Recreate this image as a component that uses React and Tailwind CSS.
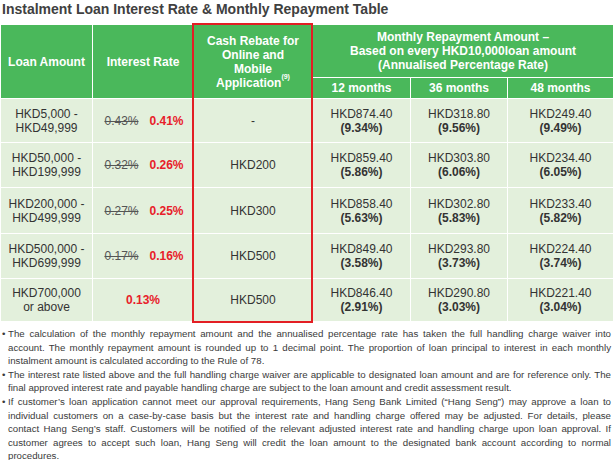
const rows = [
  { amount: ['HKD5,000 -', 'HKD49,999'], old: '0.43%', rate: '0.41%', rebate: '-', m: [['HKD874.40', '(9.34%)'], ['HKD318.80', '(9.56%)'], ['HKD249.40', '(9.49%)']], h: 'h-[44px]' },
  { amount: ['HKD50,000 -', 'HKD199,999'], old: '0.32%', rate: '0.26%', rebate: 'HKD200', m: [['HKD859.40', '(5.86%)'], ['HKD303.80', '(6.06%)'], ['HKD234.40', '(6.05%)']], h: 'h-[45px]' },
  { amount: ['HKD200,000 -', 'HKD499,999'], old: '0.27%', rate: '0.25%', rebate: 'HKD300', m: [['HKD858.40', '(5.63%)'], ['HKD302.80', '(5.83%)'], ['HKD233.40', '(5.82%)']], h: 'h-[46px]' },
  { amount: ['HKD500,000 -', 'HKD699,999'], old: '0.17%', rate: '0.16%', rebate: 'HKD500', m: [['HKD849.40', '(3.58%)'], ['HKD293.80', '(3.73%)'], ['HKD224.40', '(3.74%)']], h: 'h-[45px]' },
  { amount: ['HKD700,000', 'or above'], old: null, rate: '0.13%', rebate: 'HKD500', m: [['HKD846.40', '(2.91%)'], ['HKD290.80', '(3.03%)'], ['HKD221.40', '(3.04%)']], h: 'h-[43px]' },
];

const notes = [
  [
    'The calculation of the monthly repayment amount and the annualised percentage rate has taken the full handling charge waiver into',
    'account. The monthly repayment amount is rounded up to 1 decimal point. The proportion of loan principal to interest in each monthly',
    'instalment amount is calculated according to the Rule of 78.',
  ],
  [
    'The interest rate listed above and the full handling charge waiver are applicable to designated loan amount and are for reference only. The',
    'final approved interest rate and payable handling charge are subject to the loan amount and credit assessment result.',
  ],
  [
    'If customer\u2019s loan application cannot meet our approval requirements, Hang Seng Bank Limited (\u201cHang Seng\u201d) may approve a loan to',
    'individual customers on a case-by-case basis but the interest rate and handling charge offered may be adjusted. For details, please',
    'contact Hang Seng\u2019s staff. Customers will be notified of the relevant adjusted interest rate and handling charge upon loan approval. If',
    'customer agrees to accept such loan, Hang Seng will credit the loan amount to the designated bank account according to normal',
    'procedures.',
  ],
];

const th = 'border border-white bg-[#4ab85b] text-white font-bold text-[12px] leading-[14px] text-center align-middle p-0';
const td = 'border border-white bg-[#e3f0dc] text-[#333] text-[12px] leading-[14px] text-center align-middle p-0';

export default function App() {
  return (
    <div className="w-[613px] h-[460px] bg-white overflow-hidden font-['Liberation_Sans',Arial,sans-serif]">
      <div className="h-[24px] pl-[2px] pt-[1px] text-[14px] leading-[17px] font-bold text-[#404040]">
        Instalment Loan Interest Rate &amp; Monthly Repayment Table
      </div>

      <div className="relative">
        <table className="w-[613px] table-fixed border-collapse">
          <colgroup>
            <col className="w-[92px]" />
            <col className="w-[101px]" />
            <col className="w-[119px]" />
            <col className="w-[98px]" />
            <col className="w-[97px]" />
            <col className="w-[106px]" />
          </colgroup>
          <thead>
            <tr className="h-[53px]">
              <th rowSpan={2} className={th}>Loan Amount</th>
              <th rowSpan={2} className={th}>Interest Rate</th>
              <th rowSpan={2} className={th}>
                <div className="pt-[1px]">
                  Cash Rebate for<br />Online and<br />Mobile<br />
                  Application<sup className="text-[7px] align-top relative top-[1px]">(9)</sup>
                </div>
              </th>
              <th colSpan={3} className={th}>
                Monthly Repayment Amount –<br />
                Based on every HKD10,000loan amount<br />
                (Annualised Percentage Rate)
              </th>
            </tr>
            <tr className="h-[21px]">
              <th className={th}>12 months</th>
              <th className={th}>36 months</th>
              <th className={th}>48 months</th>
            </tr>
          </thead>
          <tbody>
            {rows.map((r, i) => (
              <tr key={i} className={r.h}>
                <td className={td}>
                  {r.amount[0]}<br />{r.amount[1]}
                </td>
                <td className={td}>
                  {r.old ? (
                    <div className="flex items-center justify-center gap-[11px] pl-[2px]">
                      <span className="text-[#555] line-through decoration-[#555]">{r.old}</span>
                      <span className="text-[#e8202a] font-bold">{r.rate}</span>
                    </div>
                  ) : (
                    <span className="text-[#e8202a] font-bold">{r.rate}</span>
                  )}
                </td>
                <td className={td}>{r.rebate}</td>
                {r.m.map((c, j) => (
                  <td key={j} className={td}>
                    <div>{c[0]}</div>
                    <div className="font-bold">{c[1]}</div>
                  </td>
                ))}
              </tr>
            ))}
          </tbody>
        </table>
        <div className="absolute left-[192px] top-[-1px] w-[121px] h-[300px] border-2 border-[#e31e24] pointer-events-none" />
      </div>

      <div className="mt-[5px] pr-[2px] text-[9.7px] leading-[13.6px] text-[#3a3a3a]">
        {notes.map((p, i) => (
          <div key={i} className="flex">
            <span className="w-[8px] shrink-0 pl-[2px]">•</span>
            <div className="flex-1 min-w-0">
              {p.map((line, k) => (
                <div
                  key={k}
                  className={k < p.length - 1 ? 'text-justify [text-align-last:justify] whitespace-nowrap' : 'text-left'}
                >
                  {line}
                </div>
              ))}
            </div>
          </div>
        ))}
      </div>
    </div>
  );
}
